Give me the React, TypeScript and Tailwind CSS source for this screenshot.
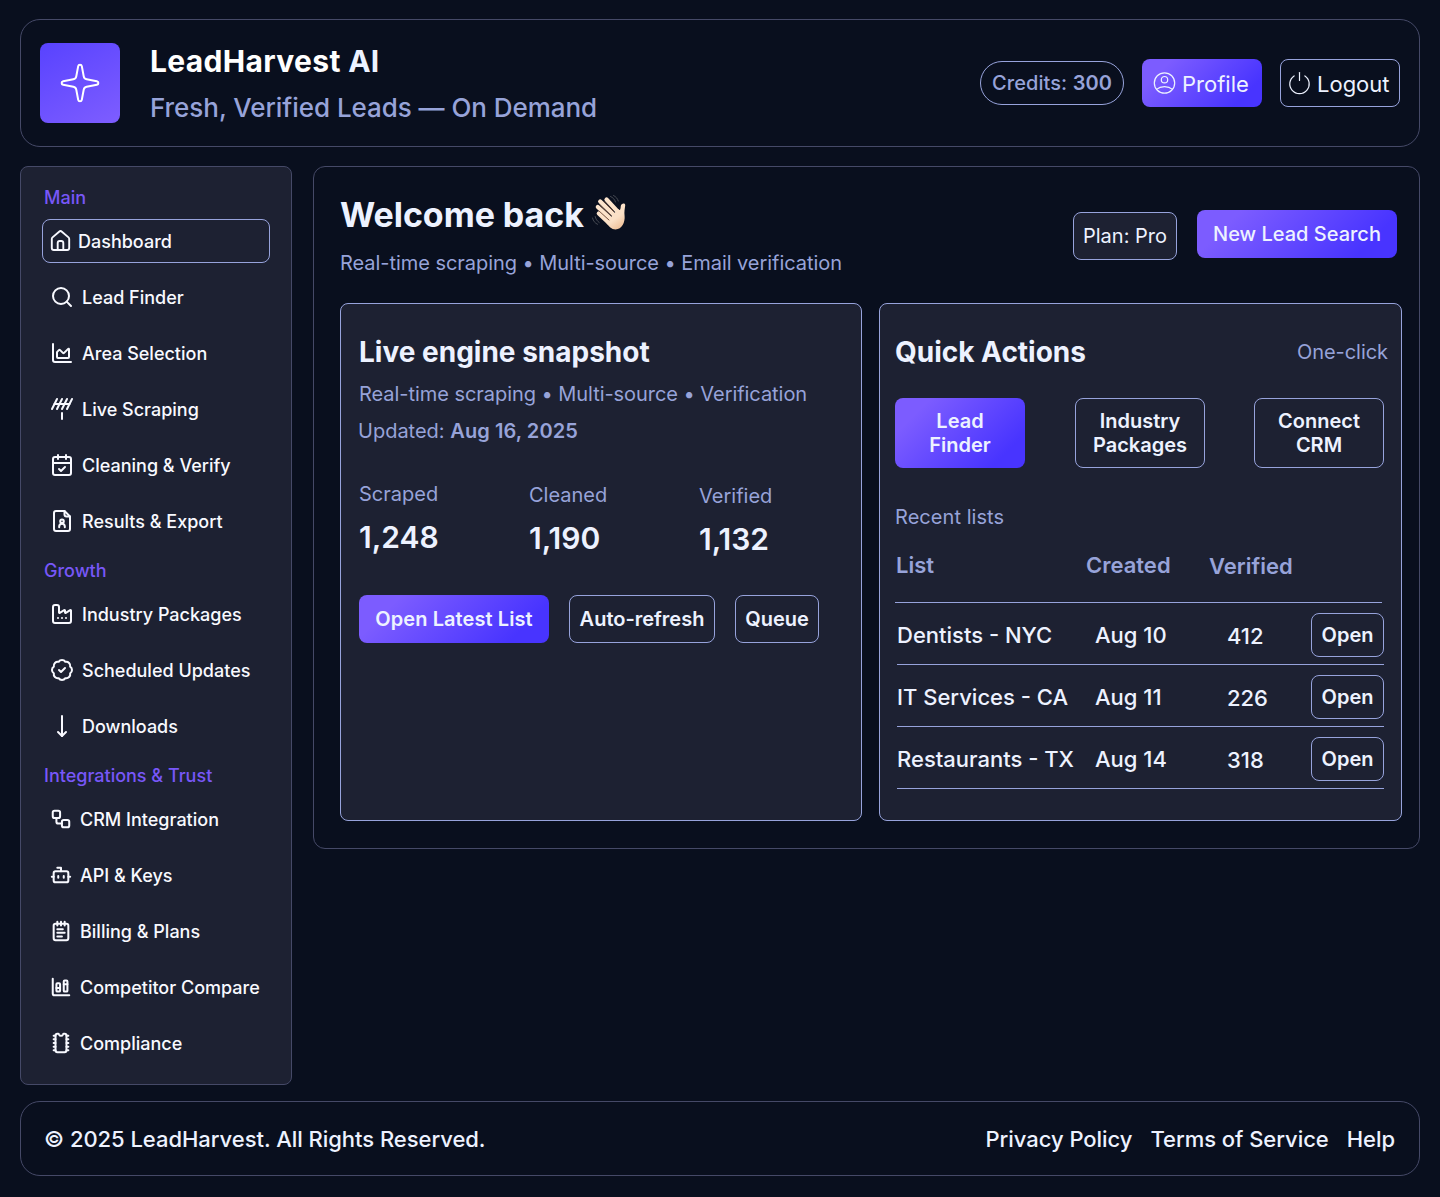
import React from 'react';
import {
  Antenna,
  BadgeCheck,
  Bot,
  CalendarCheck,
  ChartArea,
  ChartColumnStacked,
  Factory,
  MoveDown,
  NotepadText,
  Search,
  Workflow,
} from 'lucide-react';

const GRADIENT = 'bg-[linear-gradient(135deg,#7c5cff_18%,#4834ff_83%)]';

type IconProps = { size?: number | string; strokeWidth?: number | string };
type NavItem = { label: string; icon: React.ComponentType<IconProps> };

function ResumeIcon({ size = 24, strokeWidth = 2 }: IconProps) {
  return (
    <svg width={size} height={size} viewBox="0 0 24 24" fill="none" stroke="currentColor" strokeWidth={strokeWidth} strokeLinecap="round" strokeLinejoin="round">
      <path d="M14.500 2H6a2 2 0 0 0-2 2v16a2 2 0 0 0 2 2h12a2 2 0 0 0 2-2V7.500z" />
      <path d="M14.500 2v3.500a2 2 0 0 0 2 2H20" />
      <circle cx="12" cy="12.300" r="1.800" />
      <path d="M9.200 18.200v-.6a2.800 2.800 0 0 1 5.600 0v.6" />
    </svg>
  );
}

function ChipIcon({ size = 24, strokeWidth = 2 }: IconProps) {
  return (
    <svg width={size} height={size} viewBox="0 0 24 24" fill="none" stroke="currentColor" strokeWidth={strokeWidth} strokeLinecap="round" strokeLinejoin="round">
      <path d="M8 2h.9c.5 0 .8.3 1 .8a2.300 2.300 0 0 0 4.200 0c.2-.5.5-.8 1-.8h.9a2 2 0 0 1 2 2v16a2 2 0 0 1-2 2H8a2 2 0 0 1-2-2V4a2 2 0 0 1 2-2z" />
      <path d="M4 4h2M4 8h2M4 12h2M4 16h2M4 20h2M18 4h2M18 8h2M18 12h2M18 16h2M18 20h2" />
    </svg>
  );
}

const mainItems: NavItem[] = [
  { label: 'Lead Finder', icon: Search },
  { label: 'Area Selection', icon: ChartArea },
  { label: 'Live Scraping', icon: Antenna },
  { label: 'Cleaning & Verify', icon: CalendarCheck },
  { label: 'Results & Export', icon: ResumeIcon },
];

const growthItems: NavItem[] = [
  { label: 'Industry Packages', icon: Factory },
  { label: 'Scheduled Updates', icon: BadgeCheck },
  { label: 'Downloads', icon: MoveDown },
];

const trustItems: NavItem[] = [
  { label: 'CRM Integration', icon: Workflow },
  { label: 'API & Keys', icon: Bot },
  { label: 'Billing & Plans', icon: NotepadText },
  { label: 'Competitor Compare', icon: ChartColumnStacked },
  { label: 'Compliance', icon: ChipIcon },
];

const lists = [
  { name: 'Dentists - NYC', created: 'Aug 10', verified: '412' },
  { name: 'IT Services - CA', created: 'Aug 11', verified: '226' },
  { name: 'Restaurants - TX', created: 'Aug 14', verified: '318' },
];

function HomeIcon() {
  return (
    <svg width="24" height="24" viewBox="0 0 24 24" fill="none" stroke="currentColor" strokeWidth="1.9" strokeLinejoin="round" strokeLinecap="round">
      <path d="M2.8 9.9c0-.6.25-1.1.7-1.5l6.600-5.700a2.100 2.100 0 0 1 2.800 0l6.600 5.700c.45.4.7.9.7 1.500V19a2 2 0 0 1-2 2H4.800a2 2 0 0 1-2-2z" />
      <path d="M8.700 21v-7a2 2 0 0 1 2-2h1.600a2 2 0 0 1 2 2v7" />
    </svg>
  );
}

function ProfileIcon() {
  return (
    <svg width="24" height="24" viewBox="0 0 24 24" fill="none" stroke="currentColor" strokeWidth="1.200">
      <circle cx="12.500" cy="12" r="10.200" />
      <circle cx="12.500" cy="8.700" r="3.200" />
      <path d="M4.500 18.400c2-1.700 4.800-2.700 8-2.700s6 1 8 2.700" />
    </svg>
  );
}

function PowerIcon() {
  return (
    <svg width="24" height="24" viewBox="0 0 24 24" fill="none" stroke="currentColor" strokeWidth="1.200" strokeLinecap="round">
      <path d="M7.100 4.900a9.700 9.700 0 1 0 10.800 0" />
      <path d="M12.500 1.500v8" />
    </svg>
  );
}

function SparkIcon() {
  return (
    <svg width="44" height="44" viewBox="0 0 24 24" fill="none" stroke="white" strokeWidth="1.100" strokeLinejoin="round">
      <path d="M11.017 2.814a1 1 0 0 1 1.966 0l1.051 5.558a2 2 0 0 0 1.594 1.594l5.558 1.051a1 1 0 0 1 0 1.966l-5.558 1.051a2 2 0 0 0-1.594 1.594l-1.051 5.558a1 1 0 0 1-1.966 0l-1.051-5.558a2 2 0 0 0-1.594-1.594l-5.558-1.051a1 1 0 0 1 0-1.966l5.558-1.051a2 2 0 0 0 1.594-1.594z" />
    </svg>
  );
}

function WaveIcon() {
  return (
    <svg width="38" height="38" viewBox="0 0 38 38" fill="none" strokeLinecap="round" strokeLinejoin="round">
      <defs>
        <linearGradient id="skin" x1="8" y1="6" x2="30" y2="36" gradientUnits="userSpaceOnUse">
          <stop offset="0" stopColor="#fde6cf" />
          <stop offset="0.7" stopColor="#fbe0c6" />
          <stop offset="1" stopColor="#eebf97" />
        </linearGradient>
      </defs>
      <path d="M16.500 6.500 L28 19 M10.200 8.500 L24 22 M7.800 14 L21 26 M8.800 20.500 L19 30" stroke="url(#skin)" strokeWidth="4.200" />
      <path d="M17 29 L28 16 C30 18 30.500 17 30.800 13 C31 10.200 35.500 9.500 35.200 12.500 C34.900 15 34 19 34.600 23 C35.200 29 32 36.400 25.500 36.400 C21.500 36.400 19 33.500 16 29.500 Z" fill="url(#skin)" />
      <path d="M14 8.500 L23.500 18.500 M9.800 12 L21 22.500 M9 18 L19 27" stroke="#6f4a35" strokeWidth="0.900" />
      <path d="M20.500 3.500 C23 4.500 24.800 6.500 25.500 9 M23.500 2.500 C26 3.700 27.500 5.500 28.300 8 M5.200 23.500 C5.700 26 7 28 9.200 29.500 M2.500 25 C3.200 28 5 30.200 7.500 31.300" stroke="#4d5058" strokeWidth="0.900" />
    </svg>
  );
}

function NavGroup({ items, small }: { items: NavItem[]; small?: boolean }) {
  return (
    <ul className="flex flex-col gap-3">
      {items.map(({ label, icon: Icon }) => (
        <li key={label} className="flex h-11 items-center gap-2 pl-2">
          <Icon size={small ? 22 : 24} strokeWidth={small ? 2.2 : 2} />
          <span className="pt-0.5">{label}</span>
        </li>
      ))}
    </ul>
  );
}

function NavLabel({ children }: { children: React.ReactNode }) {
  return <h3 className="h-[22px] pl-0.5 leading-6 text-[#7857f8]">{children}</h3>;
}

function Sidebar() {
  return (
    <nav className="h-[919px] w-[272px] shrink-0 rounded-lg border border-[#454967] bg-[#1d2132] px-[21px] pt-[19px] text-lg font-medium text-[#f8f9ff]">
      <NavLabel>Main</NavLabel>
      <div className="mt-[11px] mb-3 flex h-11 items-center gap-[5px] rounded-lg border border-[#97a3dc] pl-1.5">
        <HomeIcon />
        <span className="pt-0.5">Dashboard</span>
      </div>
      <NavGroup items={mainItems} />
      <div className="mt-4 mb-[11px]">
        <NavLabel>Growth</NavLabel>
      </div>
      <NavGroup items={growthItems} />
      <div className="mt-4 mb-[11px]">
        <NavLabel>Integrations &amp; Trust</NavLabel>
      </div>
      <NavGroup items={trustItems} small />
    </nav>
  );
}

function Header() {
  return (
    <header className="flex h-32 items-center rounded-[20px] border border-[#454967] px-[19px]">
      <div className="flex size-20 items-center justify-center rounded-lg bg-[linear-gradient(150deg,#5a44ff_5%,#7c5cff_95%)]">
        <SparkIcon />
      </div>
      <div className="mt-0.5 ml-[30px] flex flex-col">
        <h1 className="h-[46px] text-[30px] leading-[46px] font-bold tracking-[0.33px] text-white">
          LeadHarvest <span className="text-[#edf2ff]">AI</span>
        </h1>
        <p className="h-[46px] text-[26px] leading-[48px] font-medium tracking-[-0.05px] text-[#97a3d9]">Fresh, Verified Leads — On Demand</p>
      </div>
      <div className="ml-auto flex items-center gap-[18px]">
        <div className="flex h-11 w-36 items-center justify-center rounded-full border border-[#97a3dc] text-xl font-medium tracking-[0.08px] whitespace-pre text-[#97a3d9]">
          Credits: <span className="font-semibold">300</span>
        </div>
        <button className={`flex h-12 w-[120px] items-center gap-1.5 rounded-lg pl-2.5 text-[22px] text-[#edf2ff] ${GRADIENT}`}>
          <ProfileIcon />
          <span className="pt-0.5">Profile</span>
        </button>
        <button className="flex h-12 w-[120px] items-center gap-1.5 rounded-lg border border-[#97a3dc] pl-1.5 text-[22px] text-[#edf2ff]">
          <PowerIcon />
          <span className="pt-0.5">Logout</span>
        </button>
      </div>
    </header>
  );
}

function Stat({ label, value, className }: { label: string; value: string; className?: string }) {
  return (
    <div className={`w-[170px] shrink-0 ${className ?? ''}`}>
      <div className="text-xl leading-[30px] text-[#97a3d9]">{label}</div>
      <div className="mt-2 text-[30px] leading-10 font-semibold">{value}</div>
    </div>
  );
}

const outline = 'flex items-center justify-center rounded-lg border border-[#97a3dc]';

function SnapshotCard() {
  return (
    <section className="h-[518px] w-[522px] rounded-lg border border-[#97a3dc] bg-[#1d2132] px-[18px] pt-7">
      <h3 className="text-[28px] leading-10 font-bold">Live engine snapshot</h3>
      <p className="mt-1 text-xl leading-9 tracking-[-0.05px] text-[#97a3d9]">Real-time scraping • Multi-source • Verification</p>
      <p className="mt-px -ml-px text-xl leading-9 text-[#97a3d9]">
        Updated: <span className="font-semibold tracking-[0.08px]">Aug 16, 2025</span>
      </p>
      <div className="mt-[30px] flex h-[116px]">
        <Stat label="Scraped" value="1,248" />
        <Stat label="Cleaned" value="1,190" className="pt-px" />
        <Stat label="Verified" value="1,132" className="pt-0.5" />
      </div>
      <div className="flex gap-5 text-xl font-semibold">
        <button className={`h-12 w-[190px] rounded-lg tracking-[0.08px] ${GRADIENT}`}>Open Latest List</button>
        <button className={`${outline} h-12 w-[146px]`}>Auto-refresh</button>
        <button className={`${outline} h-12 w-[84px]`}>Queue</button>
      </div>
    </section>
  );
}

function QuickActionsCard() {
  return (
    <section className="h-[518px] w-[523px] rounded-lg border border-[#97a3dc] bg-[#1d2132] pt-7 pl-[15px]">
      <div className="flex items-center justify-between pr-[13px]">
        <h3 className="text-[28px] leading-10 font-bold">Quick Actions</h3>
        <span className="text-xl tracking-[-0.05px] text-[#97a3d9]">One-click</span>
      </div>
      <div className="mt-[26px] flex text-xl leading-6 font-semibold">
        <button className={`h-[70px] w-[130px] rounded-lg px-6 ${GRADIENT}`}>Lead Finder</button>
        <button className={`${outline} ml-[50px] h-[70px] w-[130px]`}>Industry Packages</button>
        <button className={`${outline} ml-[49px] h-[70px] w-[130px] px-4`}>Connect CRM</button>
      </div>
      <p className="mt-[34px] text-xl leading-[30px] tracking-[0.05px] text-[#97a3d9]">Recent lists</p>
      <div className="mt-[18px] flex h-[53px] w-[487px] border-b border-[#97a3dc] text-[22px] leading-[30px] font-semibold text-[#97a3d9]">
        <span className="w-[190px] pl-px">List</span>
        <span className="w-[124px] pl-px">Created</span>
        <span className="pt-px">Verified</span>
      </div>
      {lists.map((row) => (
        <div key={row.name} className="ml-0.5 flex h-[62px] w-[487px] border-b border-[#97a3dc] pt-2.5 text-[22px] leading-[44px] font-medium">
          <span className="w-[198px] whitespace-nowrap">{row.name}</span>
          <span className="w-[132px]">{row.created}</span>
          <span className="pt-px">{row.verified}</span>
          <button className={`${outline} ml-auto h-11 w-[73px] text-xl font-semibold`}>Open</button>
        </div>
      ))}
    </section>
  );
}

function MainPanel() {
  return (
    <main className="h-[683px] w-[1107px] rounded-xl border border-[#454967] pl-[26px]">
      <div className="flex h-[136px] justify-between pr-[22px]">
        <div className="pt-6">
          <h2 className="flex h-12 items-center text-[34px] leading-[48px] font-bold tracking-[-0.05px]">
            Welcome back <span className="-mt-1.5 ml-1.5"><WaveIcon /></span>
          </h2>
          <p className="mt-[9px] text-xl leading-[30px] tracking-[-0.05px] text-[#97a3d9]">Real-time scraping • Multi-source • Email verification</p>
        </div>
        <div className="flex gap-5 pt-[43px] text-xl">
          <div className={`${outline} mt-0.5 h-12 w-[104px] bg-[#1d2132]`}>Plan: Pro</div>
          <button className={`h-12 w-[200px] rounded-lg font-medium ${GRADIENT}`}>New Lead Search</button>
        </div>
      </div>
      <div className="flex gap-[17px]">
        <SnapshotCard />
        <QuickActionsCard />
      </div>
    </main>
  );
}

function Footer() {
  return (
    <footer className="mt-4 flex h-[75px] items-center justify-between rounded-[20px] border border-[#454967] px-6 pt-0.5 text-[22px] font-medium tracking-[-0.04px]">
      <p className="-ml-px">© 2025 LeadHarvest. All Rights Reserved.</p>
      <div className="flex gap-[18px]">
        <span>Privacy Policy</span>
        <span>Terms of Service</span>
        <span>Help</span>
      </div>
    </footer>
  );
}

export default function App() {
  return (
    <div className="min-h-[1197px] w-[1440px] bg-[#090f1e] px-5 pt-[19px] font-['Inter',sans-serif] text-[#edf2ff]">
      <Header />
      <div className="mt-[19px] flex items-start gap-[21px]">
        <Sidebar />
        <MainPanel />
      </div>
      <Footer />
    </div>
  );
}
